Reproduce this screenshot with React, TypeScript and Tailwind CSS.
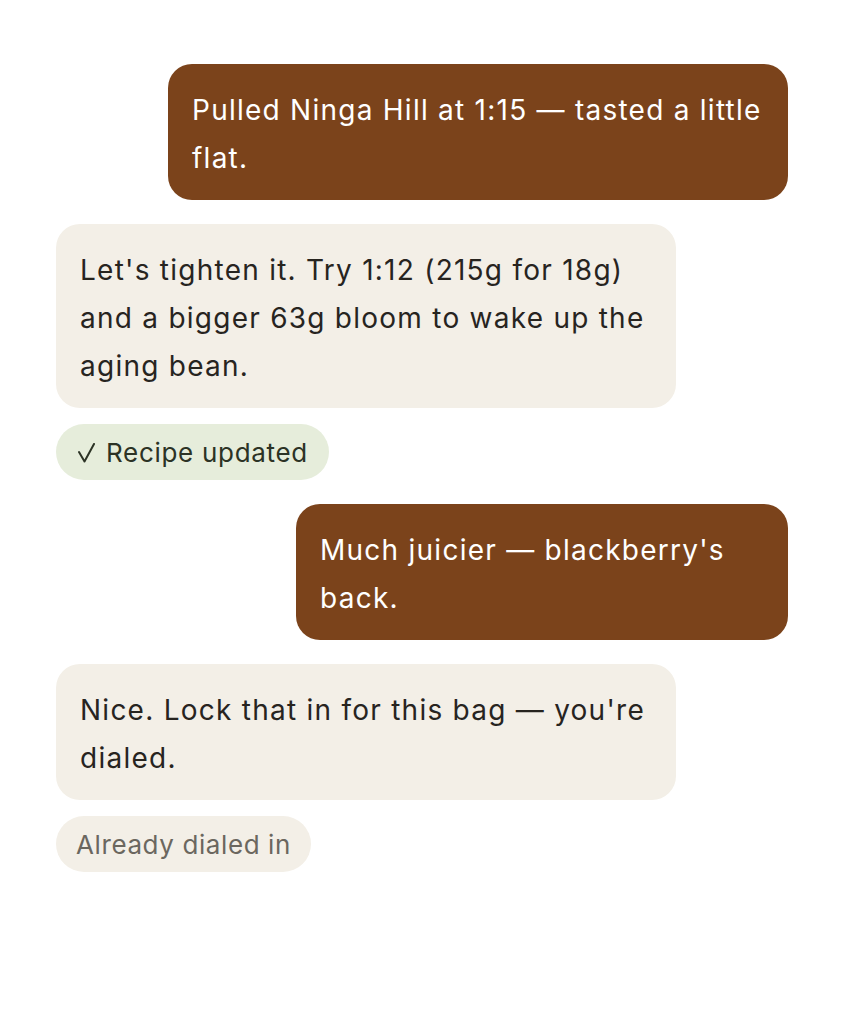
import React from 'react'

const font = { fontFamily: 'Inter, "Noto Sans", sans-serif' }

function UserBubble({ text, width }: { text: string; width: string }) {
  return (
    <div className="flex justify-end">
      <div className={`${width} rounded-[24px] bg-[#7b431b] px-6 pt-[22px] pb-[18px] text-[28px] leading-[48px] tracking-[1.25px] text-white`}>
        {text}
      </div>
    </div>
  )
}

function BotBubble({ text }: { text: string }) {
  return (
    <div className="flex justify-start">
      <div className="w-[620px] rounded-[24px] bg-[#f3efe7] px-6 pt-[22px] pb-[18px] text-[28px] leading-[48px] tracking-[1.25px] text-[#27241f]">
        {text}
      </div>
    </div>
  )
}

function Check() {
  return (
    <svg width="17" height="20" viewBox="0 0 17 20" fill="none" className="mr-[11px] mt-[1px]">
      <path d="M1 9 L6.5 18.5 L16 1" stroke="#2c3325" strokeWidth="2" strokeLinecap="round" strokeLinejoin="round" />
    </svg>
  )
}

export default function App() {
  return (
    <main className="min-h-screen bg-white px-14 pt-16 pb-16" style={font}>
      <div className="flex flex-col">
        <UserBubble width="w-[620px]" text="Pulled Ninga Hill at 1:15 — tasted a little flat." />
        <div className="mt-6">
          <BotBubble text="Let's tighten it. Try 1:12 (215g for 18g) and a bigger 63g bloom to wake up the aging bean." />
        </div>
        <div className="mt-4 flex">
          <span className="flex h-14 items-center rounded-full bg-[#e6eddb] pl-[22px] pr-[21px] text-[26px] tracking-[0.7px] text-[#2c3325]">
            <Check />
            Recipe updated
          </span>
        </div>
        <div className="mt-6">
          <UserBubble width="w-[492px]" text="Much juicier — blackberry's back." />
        </div>
        <div className="mt-6">
          <BotBubble text="Nice. Lock that in for this bag — you're dialed." />
        </div>
        <div className="mt-4 flex">
          <span className="flex h-14 items-center rounded-full bg-[#f3efe7] px-5 text-[26px] tracking-[0.6px] text-[#6b675f]">
            Already dialed in
          </span>
        </div>
      </div>
    </main>
  )
}
